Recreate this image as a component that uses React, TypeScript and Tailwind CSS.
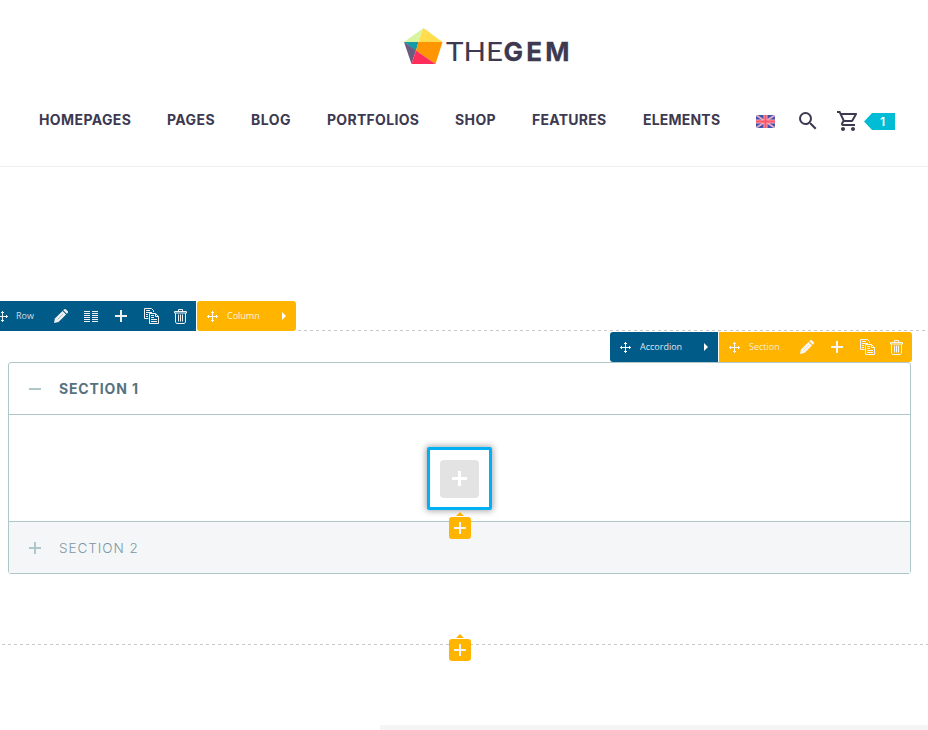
import type { ReactNode } from 'react';

const sans = "font-['Inter',sans-serif]";

function Pencil() {
  return (
    <svg width="16" height="16" viewBox="0 0 16 16" fill="currentColor">
      <path d="M1 15l.9-4.500 7.600-7.600 3.600 3.600L5.500 14.100z" />
      <path d="M10.200 2.200l1-1q.8-.6 1.600 0l2 2q.6.8 0 1.600l-1 1z" />
      <path d="M4.500 11.500l5.500-5.500" stroke="var(--bar)" strokeWidth=".5" opacity=".6" />
    </svg>
  );
}

function Plus() {
  return (
    <svg width="12" height="12" viewBox="0 0 12 12" fill="currentColor" shapeRendering="crispEdges">
      <path d="M5 0h2v5h5v2H7v5H5V7H0V5h5z" />
    </svg>
  );
}

function Move() {
  return (
    <svg width="11" height="11" viewBox="0 0 11 11" fill="currentColor" shapeRendering="crispEdges">
      <path d="M5 0h1v5h5v1H6v5H5V6H0V5h5z" />
      <path d="M4 1h3v1H4zM4 9h3v1H4zM1 4h1v3H1zM9 4h1v3H9z" />
    </svg>
  );
}

function Columns() {
  return (
    <svg width="14" height="11" viewBox="0 0 14 11" fill="currentColor" shapeRendering="crispEdges">
      {[0, 2, 4, 6, 8, 10].map((y) => (
        <path key={y} d={`M0 ${y}h6v1H0zM8 ${y}h6v1H8z`} />
      ))}
    </svg>
  );
}

function Copy() {
  return (
    <svg className="ml-[2px]" width="16" height="16" viewBox="0 0 16 16" fill="none" stroke="currentColor">
      <path d="M4.500 10.500h-4V.5h7l2 2V4" />
      <path d="M2 2.500h4M2 4.500h6M2 6.500h2M2 8.500h2" />
      <path d="M5.500 5.500h6l3 3v7h-9z" fill="var(--bar)" />
      <path d="M11.500 5.500v3h3M7 7.500h3M7 9.500h3M7 11.500h6M7 13.500h6" />
    </svg>
  );
}

function Trash() {
  return (
    <svg width="14" height="16" viewBox="0 0 14 16" fill="none" stroke="currentColor">
      <path d="M4.500 3V1.500h4V3M.5 5V3.500h12V5zM1.500 5v9l1 1.500h8l1-1.500V5" />
      <path d="M4.500 6.500v7M6.500 6.500v7M8.500 6.500v7" />
    </svg>
  );
}

function Arrow() {
  return (
    <svg width="4" height="8" viewBox="0 0 4 8" fill="#fff">
      <path d="M0 0l4 4-4 4z" />
    </svg>
  );
}

function Cell({ children }: { children: ReactNode }) {
  return <span className="flex h-[30px] w-[30px] shrink-0 items-center justify-center">{children}</span>;
}

const label = "font-['Open_Sans',sans-serif] text-[9px] leading-[30px] whitespace-nowrap opacity-85";

function NavItem({ text, width, spacing }: { text: string; width: string; spacing: string }) {
  return <a className={`block whitespace-nowrap text-[14px] font-bold leading-5 ${width} ${spacing}`}>{text}</a>;
}

function Flag() {
  return (
    <svg width="19" height="13" viewBox="0 0 19 13">
      <defs>
        <clipPath id="flag"><rect width="19" height="13" rx="2" /></clipPath>
      </defs>
      <g clipPath="url(#flag)">
        <path d="M0 0h19v13H0z" fill="#4056ae" />
        <path d="M0 0l19 13M19 0L0 13" stroke="#f0a9c0" strokeWidth="1.800" />
        <path d="M9.500 0v13M0 6.500h19" stroke="#f7a5b5" strokeWidth="4" />
        <path d="M9.500 0v13M0 6.500h19" stroke="#ff5368" strokeWidth="2" />
      </g>
    </svg>
  );
}

function Logo() {
  return (
    <svg width="180" height="45" viewBox="0 0 180 45" className="block">
      <path d="M19.500 0L0 14h14z" fill="#d7f5a0" />
      <path d="M19.500 0L14 14h24.500z" fill="#ffdd4d" />
      <path d="M0 14h14.500L12 23z" fill="#1499a6" />
      <path d="M0 14l12 8.500L7.500 36z" fill="#6b5b80" />
      <path d="M14.500 14h24L31.500 36 12 22.500z" fill="#ff9500" />
      <path d="M12 22.500L31.500 36h-24z" fill="#ff2d5b" />
      <text x="42" y="33" fontFamily="Lato, sans-serif" fontSize="26.500" fill="#3c3950" textLength="57" lengthAdjust="spacingAndGlyphs">THE</text>
      <text x="99.500" y="33" fontFamily="Inter, sans-serif" fontSize="26" fontWeight="700" fill="#3c3950" stroke="#3c3950" strokeWidth=".3" textLength="66">GEM</text>
    </svg>
  );
}

function AddButton() {
  return (
    <div className="flex w-[22px] flex-col items-center gap-px text-[#f5f5f5]">
      <svg width="8" height="4" viewBox="0 0 8 4"><path d="M4 0l4 4H0z" fill="#ffb400" /></svg>
      <div className="flex h-[22px] w-[22px] items-center justify-center rounded-[3px] bg-[#ffb400]"><Plus /></div>
    </div>
  );
}

const dashes = 'h-px bg-[repeating-linear-gradient(90deg,transparent_0_2px,#c8c8c8_2px_5px,transparent_5px_6px)]';

export default function App() {
  return (
    <div className={`h-[730px] w-[928px] overflow-hidden bg-white text-[#3c3950] ${sans}`}>
      <header className="h-[167px] border-b border-[#eee] pt-7">
        <div className="ml-[404px]"><Logo /></div>
        <nav className="ml-[39px] mt-[33px] flex h-[30px] items-center">
          <div className="-mt-[2px] flex gap-9">
            <NavItem text="HOMEPAGES" width="w-[92px]" spacing="tracking-[0.4px]" />
            <NavItem text="PAGES" width="w-[48px]" spacing="tracking-[0.4px]" />
            <NavItem text="BLOG" width="w-[40px]" spacing="tracking-[0.5px]" />
            <NavItem text="PORTFOLIOS" width="w-[92px]" spacing="tracking-[0.3px]" />
            <NavItem text="SHOP" width="w-[41px]" spacing="tracking-[0.4px]" />
            <NavItem text="FEATURES" width="w-[75px]" spacing="tracking-[0.25px]" />
            <NavItem text="ELEMENTS" width="w-[77px]" spacing="tracking-[0.2px]" />
          </div>
          <div className="ml-9"><Flag /></div>
          <svg className="ml-[21px]" width="24" height="24" viewBox="0 0 24 24" fill="currentColor">
            <path d="M15.500 14h-.79l-.28-.27A6.471 6.471 0 0 0 16 9.500 6.500 6.500 0 1 0 9.500 16c1.610 0 3.090-.59 4.230-1.570l.27.28v.79l5 4.990L20.490 19l-4.990-5zm-6 0C7.010 14 5 11.990 5 9.500S7.010 5 9.500 5 14 7.010 14 9.500 11.990 14 9.500 14z" />
          </svg>
          <svg className="ml-4" width="24" height="24" viewBox="0 0 24 24" fill="currentColor">
            <path d="M15.550 13c.75 0 1.410-.41 1.750-1.030l3.580-6.490A.996.996 0 0 0 20.010 4H5.210l-.94-2H1v2h2l3.600 7.590-1.350 2.440C4.520 15.370 5.480 17 7 17h12v-2H7l1.100-2h7.450zM6.160 6h12.150l-2.760 5H8.530L6.160 6zM7 18c-1.100 0-1.990.9-1.990 2S5.900 22 7 22s2-.9 2-2-.9-2-2-2zm10 0c-1.100 0-1.990.9-1.990 2s.89 2 1.990 2 2-.9 2-2-.9-2-2-2z" />
          </svg>
          <span className="ml-1 mt-px flex h-[17px] w-[31px] items-center justify-center bg-[#00bcd4] pl-[6px] text-[12px] font-semibold text-white [clip-path:polygon(0_50%,26%_0,100%_0,100%_100%,26%_100%)]">1</span>
        </nav>
      </header>

      <section className="relative pt-[134px]">
        <div className="flex h-[30px] items-end">
          <div className="-ml-[13px] flex w-[209px] shrink-0 bg-[#005b89] text-[#f0f0f0] [--bar:#005b89]">
            <Cell><Move /></Cell>
            <span className={`-ml-px w-[30px] ${label}`}>Row</span>
            <Cell><Pencil /></Cell>
            <Cell><Columns /></Cell>
            <Cell><Plus /></Cell>
            <Cell><Copy /></Cell>
            <Cell><Trash /></Cell>
          </div>
          <div className="ml-px flex w-[99px] shrink-0 items-center rounded-[3px] bg-[#ffb400] text-white">
            <Cell><Move /></Cell>
            <span className={`w-[55px] ${label}`}>Column</span>
            <Arrow />
          </div>
          <div className={`flex-1 ${dashes}`} />
        </div>

        <div className="mr-4 mt-px flex justify-end">
          <div className="flex w-[108px] items-center rounded-l-[3px] bg-[#005b89] text-white">
            <Cell><Move /></Cell>
            <span className={`w-16 ${label}`}>Accordion</span>
            <Arrow />
          </div>
          <div className="ml-px flex w-[193px] rounded-r-[3px] bg-[#ffb400] text-[#f5f5f5] [--bar:#ffb400]">
            <Cell><Move /></Cell>
            <span className={`w-[43px] ${label}`}>Section</span>
            <Cell><Pencil /></Cell>
            <Cell><Plus /></Cell>
            <Cell><Copy /></Cell>
            <Cell><Trash /></Cell>
          </div>
        </div>

        <div className="ml-2 h-[212px] w-[903px] rounded-[3px] border border-[#b0c7ca]">
          <h3 className="flex h-[52px] items-center border-b border-[#b0c7ca] pl-5 text-[#56727f]">
            <span className="h-[2px] w-3 bg-[#b0c7ca]" />
            <span className="ml-[18px] text-[14px] font-bold tracking-[0.85px]">SECTION 1</span>
          </h3>
          <div className="flex h-[106px] justify-center pt-8">
            <div className="flex h-[63px] w-[65px] items-center justify-center rounded-[2px] border-3 border-[#00b0f5] bg-white shadow-[0_0_6px_1px_rgba(0,0,0,0.35)]">
              <div className="flex h-[38px] w-[39px] items-center justify-center rounded-[4px] bg-[#e3e3e3] text-white">
                <svg width="15" height="15" viewBox="0 0 15 15" shapeRendering="crispEdges"><path d="M6 0h3v6h6v3H9v6H6V9H0V6h6z" fill="#fff" /></svg>
              </div>
            </div>
          </div>
          <h3 className="flex h-[52px] items-center border-t border-[#b0c7ca] bg-[#f4f6f7] pl-5 text-[#b0c7ca]">
            <Plus />
            <span className="ml-[18px] pt-[2px] text-[13.5px] font-light tracking-[0.95px] text-[#7b98a5]">SECTION 2</span>
          </h3>
        </div>
        <div className="absolute left-[449px] top-[345px]"><AddButton /></div>

        <div className={`relative mt-[70px] ${dashes}`}>
          <div className="absolute -top-[10px] left-[449px]"><AddButton /></div>
        </div>
        <div className="ml-[380px] mt-20 h-[5px] bg-[#f5f5f5]" />
      </section>
    </div>
  );
}
